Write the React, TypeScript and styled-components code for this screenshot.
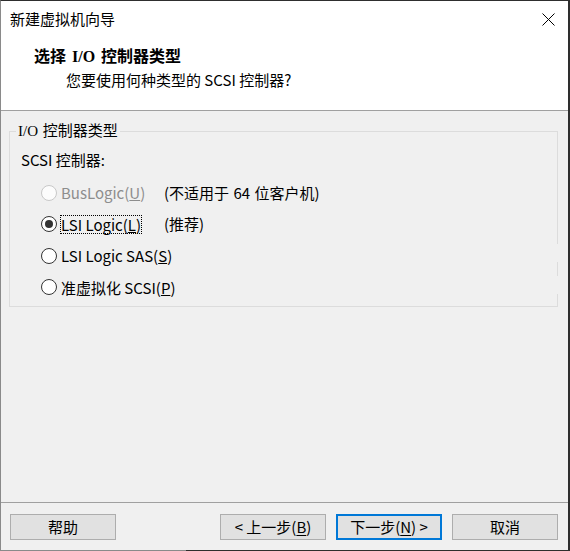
import React from 'react';
import styled, { createGlobalStyle } from 'styled-components';

const GlobalStyle = createGlobalStyle`
  html, body {
    margin: 0;
    padding: 0;
    background: #2b2b2b;
    overflow: hidden;
  }
  * {
    box-sizing: border-box;
  }
`;

const Window = styled.div`
  position: relative;
  width: 570px;
  height: 551px;
  display: flex;
  flex-direction: column;
  background: #f0f0f0;
  border-left: 1px solid #8a8a8a;
  border-top: 1px solid #2e2e2e;
  border-right: 2px solid #2e2e2e;
  border-bottom: 1px solid #8a8a8a;
  font-family: "Noto Sans CJK SC", "Liberation Sans", sans-serif;
  font-size: 15px;
  color: #000;

  /* shadow of the window behind, crossing the lower edge */
  &::after {
    content: '';
    position: absolute;
    left: 185px;
    right: -2px;
    bottom: -1px;
    height: 1px;
    background: #2e2e2e;
  }
`;

const TitleBar = styled.div`
  height: 36px;
  display: flex;
  align-items: center;
  justify-content: space-between;
  padding: 0 13px 0 9px;
  background: #fff;
  line-height: 20px;
`;

const CloseButton = styled.svg`
  width: 13px;
  height: 13px;
  display: block;
`;

const Header = styled.div`
  height: 74px;
  background: #fff;
  border-bottom: 1px solid #a0a0a0;
  padding-top: 10px;
`;

const Heading = styled.div`
  padding-left: 33px;
  font-family: "Liberation Serif", "Noto Sans CJK SC", serif;
  font-size: 16px;
  font-weight: bold;
  line-height: 20px;
  word-spacing: 2px;
`;

const SubHeading = styled.div`
  padding-left: 65px;
  margin-top: 3px;
  line-height: 20px;
`;

const Body = styled.div`
  flex: 1;
  padding: 0 10px 0 8px;
`;

const GroupBox = styled.fieldset`
  position: relative;
  margin: 10px 0 0 0;
  padding: 9px 6px 3px 6px;
  border: 1px solid #dcdcdc;
  min-width: 0;
`;

const GroupTitle = styled.legend`
  padding: 0 2px;
  line-height: 20px;
  font-family: "Liberation Serif", "Noto Sans CJK SC", serif;
  font-size: 15px;
  word-spacing: 1px;
`;

const FieldLabel = styled.div`
  margin-left: 5px;
  line-height: 20px;
  margin-bottom: 7px;
`;

const RadioRow = styled.div<{ $cover?: boolean }>`
  position: relative;
  height: 31.5px;
  display: grid;
  grid-template-columns: 16px 99px auto;
  column-gap: 4px;
  align-items: center;
  padding-left: 25px;

  ${({ $cover }) =>
    $cover &&
    `
    &::after {
      content: '';
      position: absolute;
      right: -8px;
      top: 4px;
      width: 4px;
      height: 18px;
      background: #f0f0f0;
    }
  `}
`;

const RadioCircle = styled.span<{ $checked?: boolean; $disabled?: boolean }>`
  width: 16px;
  height: 16px;
  border-radius: 50%;
  border: 1px solid ${({ $disabled }) => ($disabled ? '#c8c8c8' : '#333')};
  background: ${({ $disabled }) => ($disabled ? '#fcfcfc' : '#fff')};
  display: flex;
  align-items: center;
  justify-content: center;

  &::before {
    content: '';
    width: 8px;
    height: 8px;
    border-radius: 50%;
    background: #333;
    display: ${({ $checked }) => ($checked ? 'block' : 'none')};
  }
`;

const RadioText = styled.span<{ $disabled?: boolean; $focused?: boolean }>`
  justify-self: start;
  display: inline-block;
  line-height: 17px;
  white-space: nowrap;
  color: ${({ $disabled }) => ($disabled ? '#8d8d8d' : '#000')};
  outline: ${({ $focused }) => ($focused ? '1px dotted #000' : 'none')};
`;

const Note = styled.span`
  line-height: 20px;
  white-space: nowrap;
  word-spacing: 1px;
`;

const Footer = styled.div`
  border-top: 1px solid #a0a0a0;
  padding: 11px 10px 10px 9px;
  display: flex;
  gap: 10px;
`;

const Button = styled.button<{ $default?: boolean; $push?: boolean }>`
  width: 106px;
  height: 26px;
  padding: 0;
  margin-left: ${({ $push }) => ($push ? 'auto' : '0')};
  background: #e1e1e1;
  border: ${({ $default }) => ($default ? '2px solid #0078d7' : '1px solid #adadad')};
  font-family: "Noto Sans CJK SC", "Liberation Sans", sans-serif;
  font-size: 15px;
  line-height: 20px;
  color: #000;

  u {
    text-underline-offset: 2px;
  }
`;

type Option = {
  label: string;
  key: string;
  note?: string;
  checked?: boolean;
  disabled?: boolean;
  focused?: boolean;
  cover?: boolean;
};

const options: Option[] = [
  { label: 'BusLogic', key: 'U', note: '(不适用于 64 位客户机)', disabled: true },
  { label: 'LSI Logic', key: 'L', note: '(推荐)', checked: true, focused: true },
  { label: 'LSI Logic SAS', key: 'S', cover: true },
  { label: '准虚拟化 SCSI', key: 'P', cover: true },
];

export default function App() {
  return (
    <>
      <GlobalStyle />
      <Window>
        <TitleBar>
          <span>新建虚拟机向导</span>
          <CloseButton viewBox="0 0 13 13">
            <path d="M0.5 0.5 L12.5 12.5 M12.5 0.5 L0.5 12.5" stroke="#000" strokeWidth="1" fill="none" />
          </CloseButton>
        </TitleBar>
        <Header>
          <Heading>选择 I/O 控制器类型</Heading>
          <SubHeading>您要使用何种类型的 SCSI 控制器?</SubHeading>
        </Header>
        <Body>
          <GroupBox>
            <GroupTitle>I/O 控制器类型</GroupTitle>
            <FieldLabel>SCSI 控制器:</FieldLabel>
            {options.map((o) => (
              <RadioRow key={o.key} $cover={o.cover}>
                <RadioCircle $checked={o.checked} $disabled={o.disabled} />
                <RadioText $disabled={o.disabled} $focused={o.focused}>
                  {o.label}(<u>{o.key}</u>)
                </RadioText>
                {o.note ? <Note>{o.note}</Note> : <span />}
              </RadioRow>
            ))}
          </GroupBox>
        </Body>
        <Footer>
          <Button>帮助</Button>
          <Button $push>
            &lt; 上一步(<u>B</u>)
          </Button>
          <Button $default>
            下一步(<u>N</u>) &gt;
          </Button>
          <Button>取消</Button>
        </Footer>
      </Window>
    </>
  );
}
